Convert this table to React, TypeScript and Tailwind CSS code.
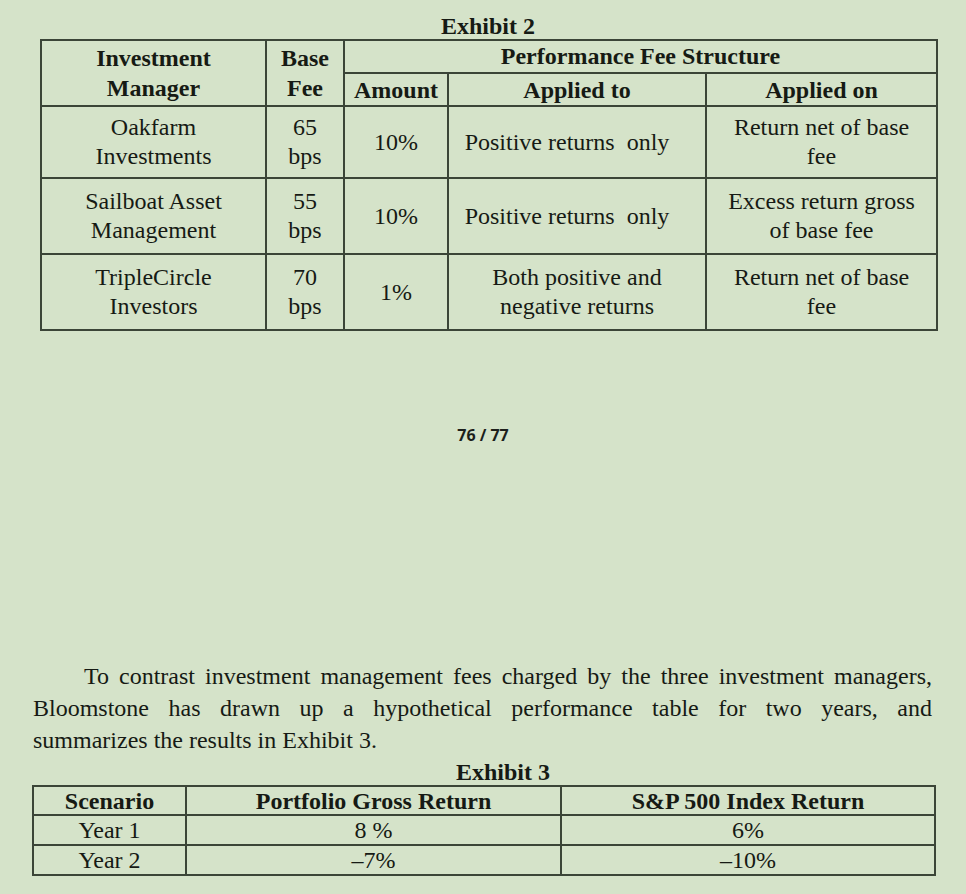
import React from "react";

const serif = { fontFamily: '"Liberation Serif", "Times New Roman", serif' };

interface FeeRow {
  manager: [string, string];
  fee: string;
  amount: string;
  appliedTo: string[];
  appliedOn: string[];
  height: string;
}

const feeRows: FeeRow[] = [
  {
    manager: ["Oakfarm", "Investments"],
    fee: "65",
    amount: "10%",
    appliedTo: ["Positive returns  only"],
    appliedOn: ["Return net of base", "fee"],
    height: "h-[72px]",
  },
  {
    manager: ["Sailboat Asset", "Management"],
    fee: "55",
    amount: "10%",
    appliedTo: ["Positive returns  only"],
    appliedOn: ["Excess return gross", "of base fee"],
    height: "h-[76px]",
  },
  {
    manager: ["TripleCircle", "Investors"],
    fee: "70",
    amount: "1%",
    appliedTo: ["Both positive and", "negative returns"],
    appliedOn: ["Return net of base", "fee"],
    height: "h-[76px]",
  },
];

const scenarios = [
  { name: "Year 1", portfolio: "8 %", index: "6%" },
  { name: "Year 2", portfolio: "\u20137%", index: "\u201310%" },
];

const cell = "border-2 border-[#3b4537] text-center align-middle p-0";

const App = () => {
  return (
    <div
      className="w-[966px] h-[894px] bg-[#d5e3c9] text-[#161a14] text-[24px] leading-[29px] overflow-hidden"
      style={serif}
    >
      {/* Exhibit 2 */}
      <div className="pt-[13px] pl-[40px] w-[936px] text-center font-bold leading-[26px]">
        Exhibit 2
      </div>
      <table className="ml-[40px] w-[896px] border-collapse table-fixed">
        <colgroup>
          <col className="w-[225px]" />
          <col className="w-[78px]" />
          <col className="w-[104px]" />
          <col className="w-[258px]" />
          <col className="w-[231px]" />
        </colgroup>
        <thead>
          <tr className="h-[33px]">
            <th rowSpan={2} className={cell + " leading-[30px]"}>
              Investment
              <br />
              Manager
            </th>
            <th rowSpan={2} className={cell + " leading-[30px]"}>
              Base
              <br />
              Fee
            </th>
            <th colSpan={3} className={cell}>
              Performance Fee Structure
            </th>
          </tr>
          <tr className="h-[31px]">
            <th className={cell + " pt-[2px]"}>Amount</th>
            <th className={cell + " pt-[2px]"}>Applied to</th>
            <th className={cell + " pt-[2px]"}>Applied on</th>
          </tr>
        </thead>
        <tbody>
          {feeRows.map((r) => (
            <tr key={r.manager[0]} className={r.height}>
              <td className={cell}>
                {r.manager[0]}
                <br />
                {r.manager[1]}
              </td>
              <td className={cell}>
                {r.fee}
                <br />
                bps
              </td>
              <td className={cell}>{r.amount}</td>
              <td className={cell + " whitespace-pre" + (r.appliedTo.length === 1 ? " pr-[20px]" : "")}>
                {r.appliedTo.map((t, i) => (
                  <div key={i}>{t}</div>
                ))}
              </td>
              <td className={cell}>
                {r.appliedOn.map((t, i) => (
                  <div key={i}>{t}</div>
                ))}
              </td>
            </tr>
          ))}
        </tbody>
      </table>

      {/* page number */}
      <div
        className="mt-[94px] text-center text-[16px] font-bold leading-[20px] text-[#1c1f1b]"
        style={{ fontFamily: '"Open Sans", sans-serif' }}
      >
        76 / 77
      </div>

      {/* paragraph */}
      <div className="mt-[215px] ml-[33px] w-[899px] leading-[32px]">
        <div className="pl-[51px] text-justify [text-align-last:justify]">
          To contrast investment management fees charged by the three investment managers,
        </div>
        <div className="text-justify [text-align-last:justify]">
          Bloomstone has drawn up a hypothetical performance table for two years, and
        </div>
        <div>summarizes the results in Exhibit 3.</div>
      </div>

      {/* Exhibit 3 */}
      <div className="mt-[3px] pl-[40px] w-[966px] text-center font-bold leading-[26px]">
        Exhibit 3
      </div>
      <table className="ml-[32px] w-[902px] border-collapse table-fixed leading-[26px]">
        <colgroup>
          <col className="w-[153px]" />
          <col className="w-[375px]" />
          <col className="w-[374px]" />
        </colgroup>
        <thead>
          <tr className="h-[29px]">
            <th className={cell}>Scenario</th>
            <th className={cell}>Portfolio Gross Return</th>
            <th className={cell}>S&amp;P 500 Index Return</th>
          </tr>
        </thead>
        <tbody>
          {scenarios.map((s) => (
            <tr key={s.name} className="h-[30px]">
              <td className={cell}>{s.name}</td>
              <td className={cell}>{s.portfolio}</td>
              <td className={cell}>{s.index}</td>
            </tr>
          ))}
        </tbody>
      </table>
    </div>
  );
};

export default App;
